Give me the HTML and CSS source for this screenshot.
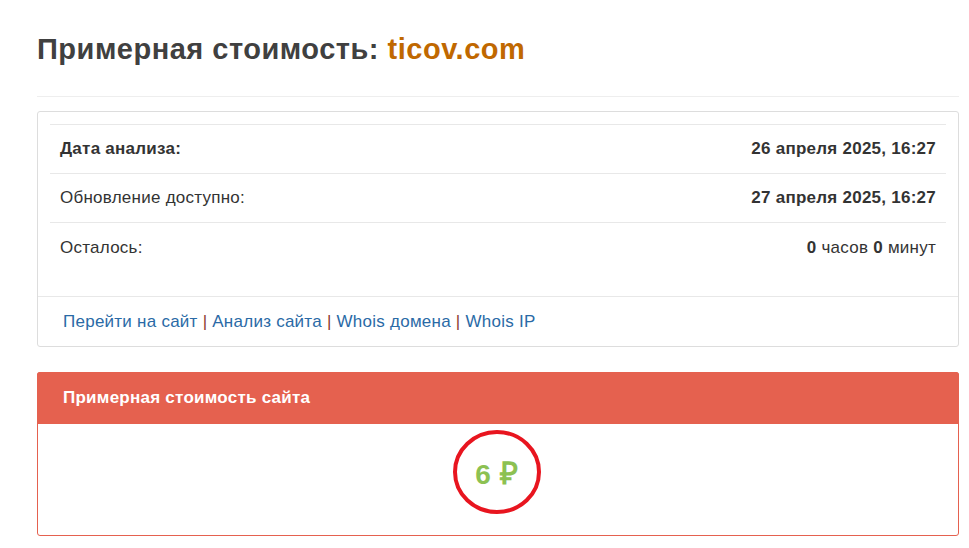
FILE: index.html
```html
<!DOCTYPE html>
<html lang="ru">
<head>
<meta charset="utf-8">
<title>Примерная стоимость: ticov.com</title>
<link rel="stylesheet" href="styles.css">
</head>
<body>
<div class="page">
  <h1 class="title">Примерная стоимость: <span class="domain">ticov.com</span></h1>
  <hr class="sep">
  <div class="panel">
    <div class="panel-body">
      <div class="info">
        <div class="row"><span class="label strong">Дата анализа:</span><span class="value strong">26 апреля 2025, 16:27</span></div>
        <div class="row"><span class="label">Обновление доступно:</span><span class="value strong">27 апреля 2025, 16:27</span></div>
        <div class="row"><span class="label">Осталось:</span><span class="value"><b>0</b> часов <b>0</b> минут</span></div>
      </div>
    </div>
    <div class="panel-footer">
      <div class="links"><a href="#">Перейти на сайт</a> <span class="pipe">|</span> <a href="#">Анализ сайта</a> <span class="pipe">|</span> <a href="#">Whois домена</a> <span class="pipe">|</span> <a href="#">Whois IP</a></div>
    </div>
  </div>
  <div class="panel panel-red">
    <div class="panel-heading">Примерная стоимость сайта</div>
    <div class="price-body">
      <div class="price">
        <span class="price-text">6 <span class="rub">₽</span></span>
        <svg class="ring" width="92" height="88" viewBox="0 0 92 88"><ellipse cx="46" cy="44" rx="42" ry="40" fill="none" stroke="#e8151f" stroke-width="4"/></svg>
      </div>
    </div>
  </div>
</div>
</body>
</html>
```
FILE: styles.css
```css
html, body { margin: 0; padding: 0; background: #fff; }
body { font-family: "Liberation Sans", Arial, sans-serif; font-size: 17px; letter-spacing: 0.25px; color: #333; }
.page { padding: 0 10px 0 37px; }
.title { margin: 0; padding-top: 32px; font-size: 29px; letter-spacing: 0.5px; line-height: 34px; font-weight: bold; color: #404040; height: 34px; }
.domain { color: #c06800; }
.sep { border: 0; border-top: 1px solid #eee; margin: 30px 0 14px; }
.panel { border: 1px solid #ddd; border-radius: 3px; background: #fff; }
.panel-body { padding: 12px 12px 24px; }
.info { border-top: 1px solid #e8e8e8; }
.row { display: flex; justify-content: space-between; align-items: center; height: 48px; padding: 0 10px; border-bottom: 1px solid #e8e8e8; }
.row:last-child { border-bottom: 0; height: 49px; }
.strong { font-weight: bold; }
.value b { font-weight: bold; }
.panel-footer { border-top: 1px solid #e8e8e8; height: 49px; display: flex; align-items: center; padding-left: 25px; }
.links { white-space: pre; }
.links a { color: #2a6aa6; text-decoration: none; }
.pipe { color: #8a3a30; }
.panel-red { margin-top: 25px; border-color: #e5614f; }
.panel-heading { background: #e5614f; color: #fff; font-weight: bold; height: 52px; display: flex; align-items: center; padding-left: 26px; margin: -1px -1px 0; border-radius: 3px 3px 0 0; }
.price-body { height: 111px; display: flex; justify-content: center; align-items: center; }
.price { position: relative; width: 92px; height: 88px; display: flex; align-items: center; justify-content: center; margin-left: -3px; margin-top: -15px; }
.price-text { color: #8cc152; font-size: 28px; font-weight: bold; letter-spacing: 0; word-spacing: 1px; }
.rub { font-size: 31px; }
.ring { position: absolute; left: 0; top: 0; }
```
